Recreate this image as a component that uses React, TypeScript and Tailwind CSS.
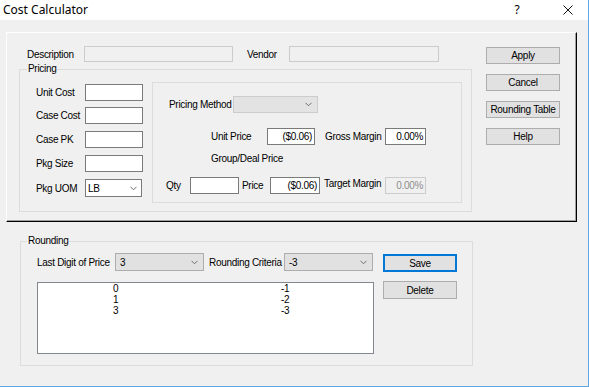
import type { ReactNode } from 'react';

const Chevron = () => (
  <svg width="7" height="5" viewBox="0 0 7 5" className="shrink-0">
    <path d="M0.5 0.8 L3.5 3.8 L6.5 0.8" fill="none" stroke="#6d6d6d" strokeWidth="1" />
  </svg>
);

interface BoxProps {
  className: string;
  value?: string;
  disabled?: boolean;
}

const TextBox = ({ className, value, disabled }: BoxProps) => (
  <div
    className={`flex items-center justify-end pr-[2px] border ${
      disabled ? 'bg-[#f0f0f0] border-[#cccccc] text-[#8d8d8d]' : 'bg-white border-[#7a7a7a]'
    } ${className}`}
  >
    {value}
  </div>
);

const Combo = ({ className, value }: { className: string; value?: string }) => (
  <div className={`flex items-center justify-between pl-[4px] pr-[5px] border ${className}`}>
    <span>{value}</span>
    <Chevron />
  </div>
);

const Btn = ({ children, className }: { children: ReactNode; className: string }) => (
  <button className={`flex items-center justify-center w-[74px] bg-[#e1e1e1] ${className}`}>
    {children}
  </button>
);

const Group = ({
  label,
  labelPos,
  className,
  children,
}: {
  label: string;
  labelPos: string;
  className: string;
  children: ReactNode;
}) => (
  <div className={`relative border border-[#dcdcdc] ${className}`}>
    <span className={`absolute -top-[7px] ${labelPos} bg-[#f0f0f0] px-[1px] leading-[12px]`}>
      {label}
    </span>
    {children}
  </div>
);

const costFields = [
  { label: 'Unit Cost', gap: '' },
  { label: 'Case Cost', gap: 'mt-[6px]' },
  { label: 'Case PK', gap: 'mt-[7px]' },
  { label: 'Pkg Size', gap: 'mt-[7px]' },
];

const roundingRows = [
  ['0', '-1'],
  ['1', '-2'],
  ['3', '-3'],
];

export default function App() {
  return (
    <div className="w-[589px] h-[387px] overflow-hidden bg-[#f0f0f0] border-r border-b border-[#60a7e6] font-['Liberation_Sans',Arial,sans-serif] text-[10px] tracking-[-0.3px] text-black">
      {/* title bar */}
      <div className="h-[20px] bg-white flex items-center pl-[3px] pr-[15px] font-['Noto_Sans',sans-serif] tracking-normal">
        <span className="text-[12px] leading-none">Cost Calculator</span>
        <span className="ml-auto w-[10px] text-center text-[12px] leading-none">?</span>
        <svg width="10" height="10" viewBox="0 0 10 10" className="ml-[41px]">
          <path d="M0.5 0.5 L9.5 9.5 M9.5 0.5 L0.5 9.5" stroke="#111" strokeWidth="1" />
        </svg>
      </div>

      {/* top panel */}
      <div className="ml-[6px] mt-[12px] w-[571px] h-[190px] flex border border-t-white border-l-white border-r-black border-b-black shadow-[inset_-1px_-1px_0_#a0a0a0]">
        <div className="w-[466px] pl-[12px] pt-[13px]">
          <div className="flex items-center h-[16px] pl-[8px]">
            <span className="w-[57px]">Description</span>
            <TextBox className="w-[149px] h-[16px]" disabled />
            <span className="ml-[14px] w-[42px]">Vendor</span>
            <TextBox className="w-[150px] h-[16px]" disabled />
          </div>

          <Group label="Pricing" labelPos="left-[7px]" className="mt-[7px] w-[453px] h-[143px] flex">
            <div className="w-[123px] pl-[16px] pt-[14px] flex flex-col">
              {costFields.map((f) => (
                <div key={f.label} className={`flex items-center h-[17px] ${f.gap}`}>
                  <span className="w-[49px]">{f.label}</span>
                  <TextBox className="w-[58px] h-[17px]" />
                </div>
              ))}
              <div className="flex items-center h-[18px] mt-[7px]">
                <span className="w-[49px]">Pkg UOM</span>
                <Combo className="w-[57px] h-[18px] bg-white border-[#7a7a7a] !pl-[2px] !pr-[4px]" value="LB" />
              </div>
            </div>

            <div className="ml-[9px] mt-[12px] w-[310px] h-[121px] border border-[#dcdcdc]">
              <div className="flex items-center h-[17px] mt-[13px] pl-[16px]">
                <span className="w-[64px]">Pricing Method</span>
                <Combo className="w-[85px] h-[17px] bg-[#e3e3e3] border-[#cccccc]" />
              </div>
              <div className="flex items-center h-[17px] mt-[15px] pl-[58px]">
                <span className="w-[56px]">Unit Price</span>
                <TextBox className="w-[48px] h-[17px]" value="($0.06)" />
                <span className="ml-[10px] w-[60px]">Gross Margin</span>
                <TextBox className="w-[41px] h-[17px]" value="0.00%" />
              </div>
              <div className="mt-[8px] pl-[58px] leading-[12px]">Group/Deal Price</div>
              <div className="flex items-center h-[17px] mt-[12px] pl-[13px]">
                <span className="w-[24px]">Qty</span>
                <TextBox className="w-[49px] h-[17px]" />
                <span className="ml-[3px] w-[28px]">Price</span>
                <TextBox className="w-[50px] h-[17px]" value="($0.06)" />
                <span className="ml-[4px] w-[61px] mb-[4px]">Target Margin</span>
                <TextBox className="w-[41px] h-[17px]" value="0.00%" disabled />
              </div>
            </div>
          </Group>
        </div>

        <div className="ml-[13px] pt-[14px] flex flex-col gap-[10px]">
          <Btn className="h-[17px] border border-[#adadad]">Apply</Btn>
          <Btn className="h-[17px] border border-[#adadad]">Cancel</Btn>
          <Btn className="h-[17px] border border-[#adadad]">Rounding Table</Btn>
          <Btn className="h-[17px] border border-[#adadad]">Help</Btn>
        </div>
      </div>

      {/* rounding */}
      <Group label="Rounding" labelPos="left-[6px]" className="mt-[19px] ml-[20px] w-[453px] h-[125px] flex pl-[16px] pt-[11px]">
        <div className="w-[337px]">
          <div className="flex items-center h-[18px]">
            <span className="w-[78px]">Last Digit of Price</span>
            <Combo className="w-[89px] h-[18px] bg-[#e1e1e1] border-[#adadad]" value="3" />
            <span className="w-[80px] pl-[5px]">Rounding Criteria</span>
            <Combo className="w-[89px] h-[18px] bg-[#e1e1e1] border-[#adadad]" value="-3" />
          </div>
          <div className="mt-[11px] h-[72px] bg-white border border-[#828790] leading-[11px]">
            {roundingRows.map(([a, b]) => (
              <div key={a} className="flex">
                <span className="w-[243px] pl-[75px]">{a}</span>
                <span>{b}</span>
              </div>
            ))}
          </div>
        </div>
        <div className="ml-[9px] mt-[1px] flex flex-col">
          <Btn className="h-[18px] border-2 border-[#0078d7]">Save</Btn>
          <Btn className="h-[18px] mt-[9px] border border-[#adadad]">Delete</Btn>
        </div>
      </Group>
    </div>
  );
}
